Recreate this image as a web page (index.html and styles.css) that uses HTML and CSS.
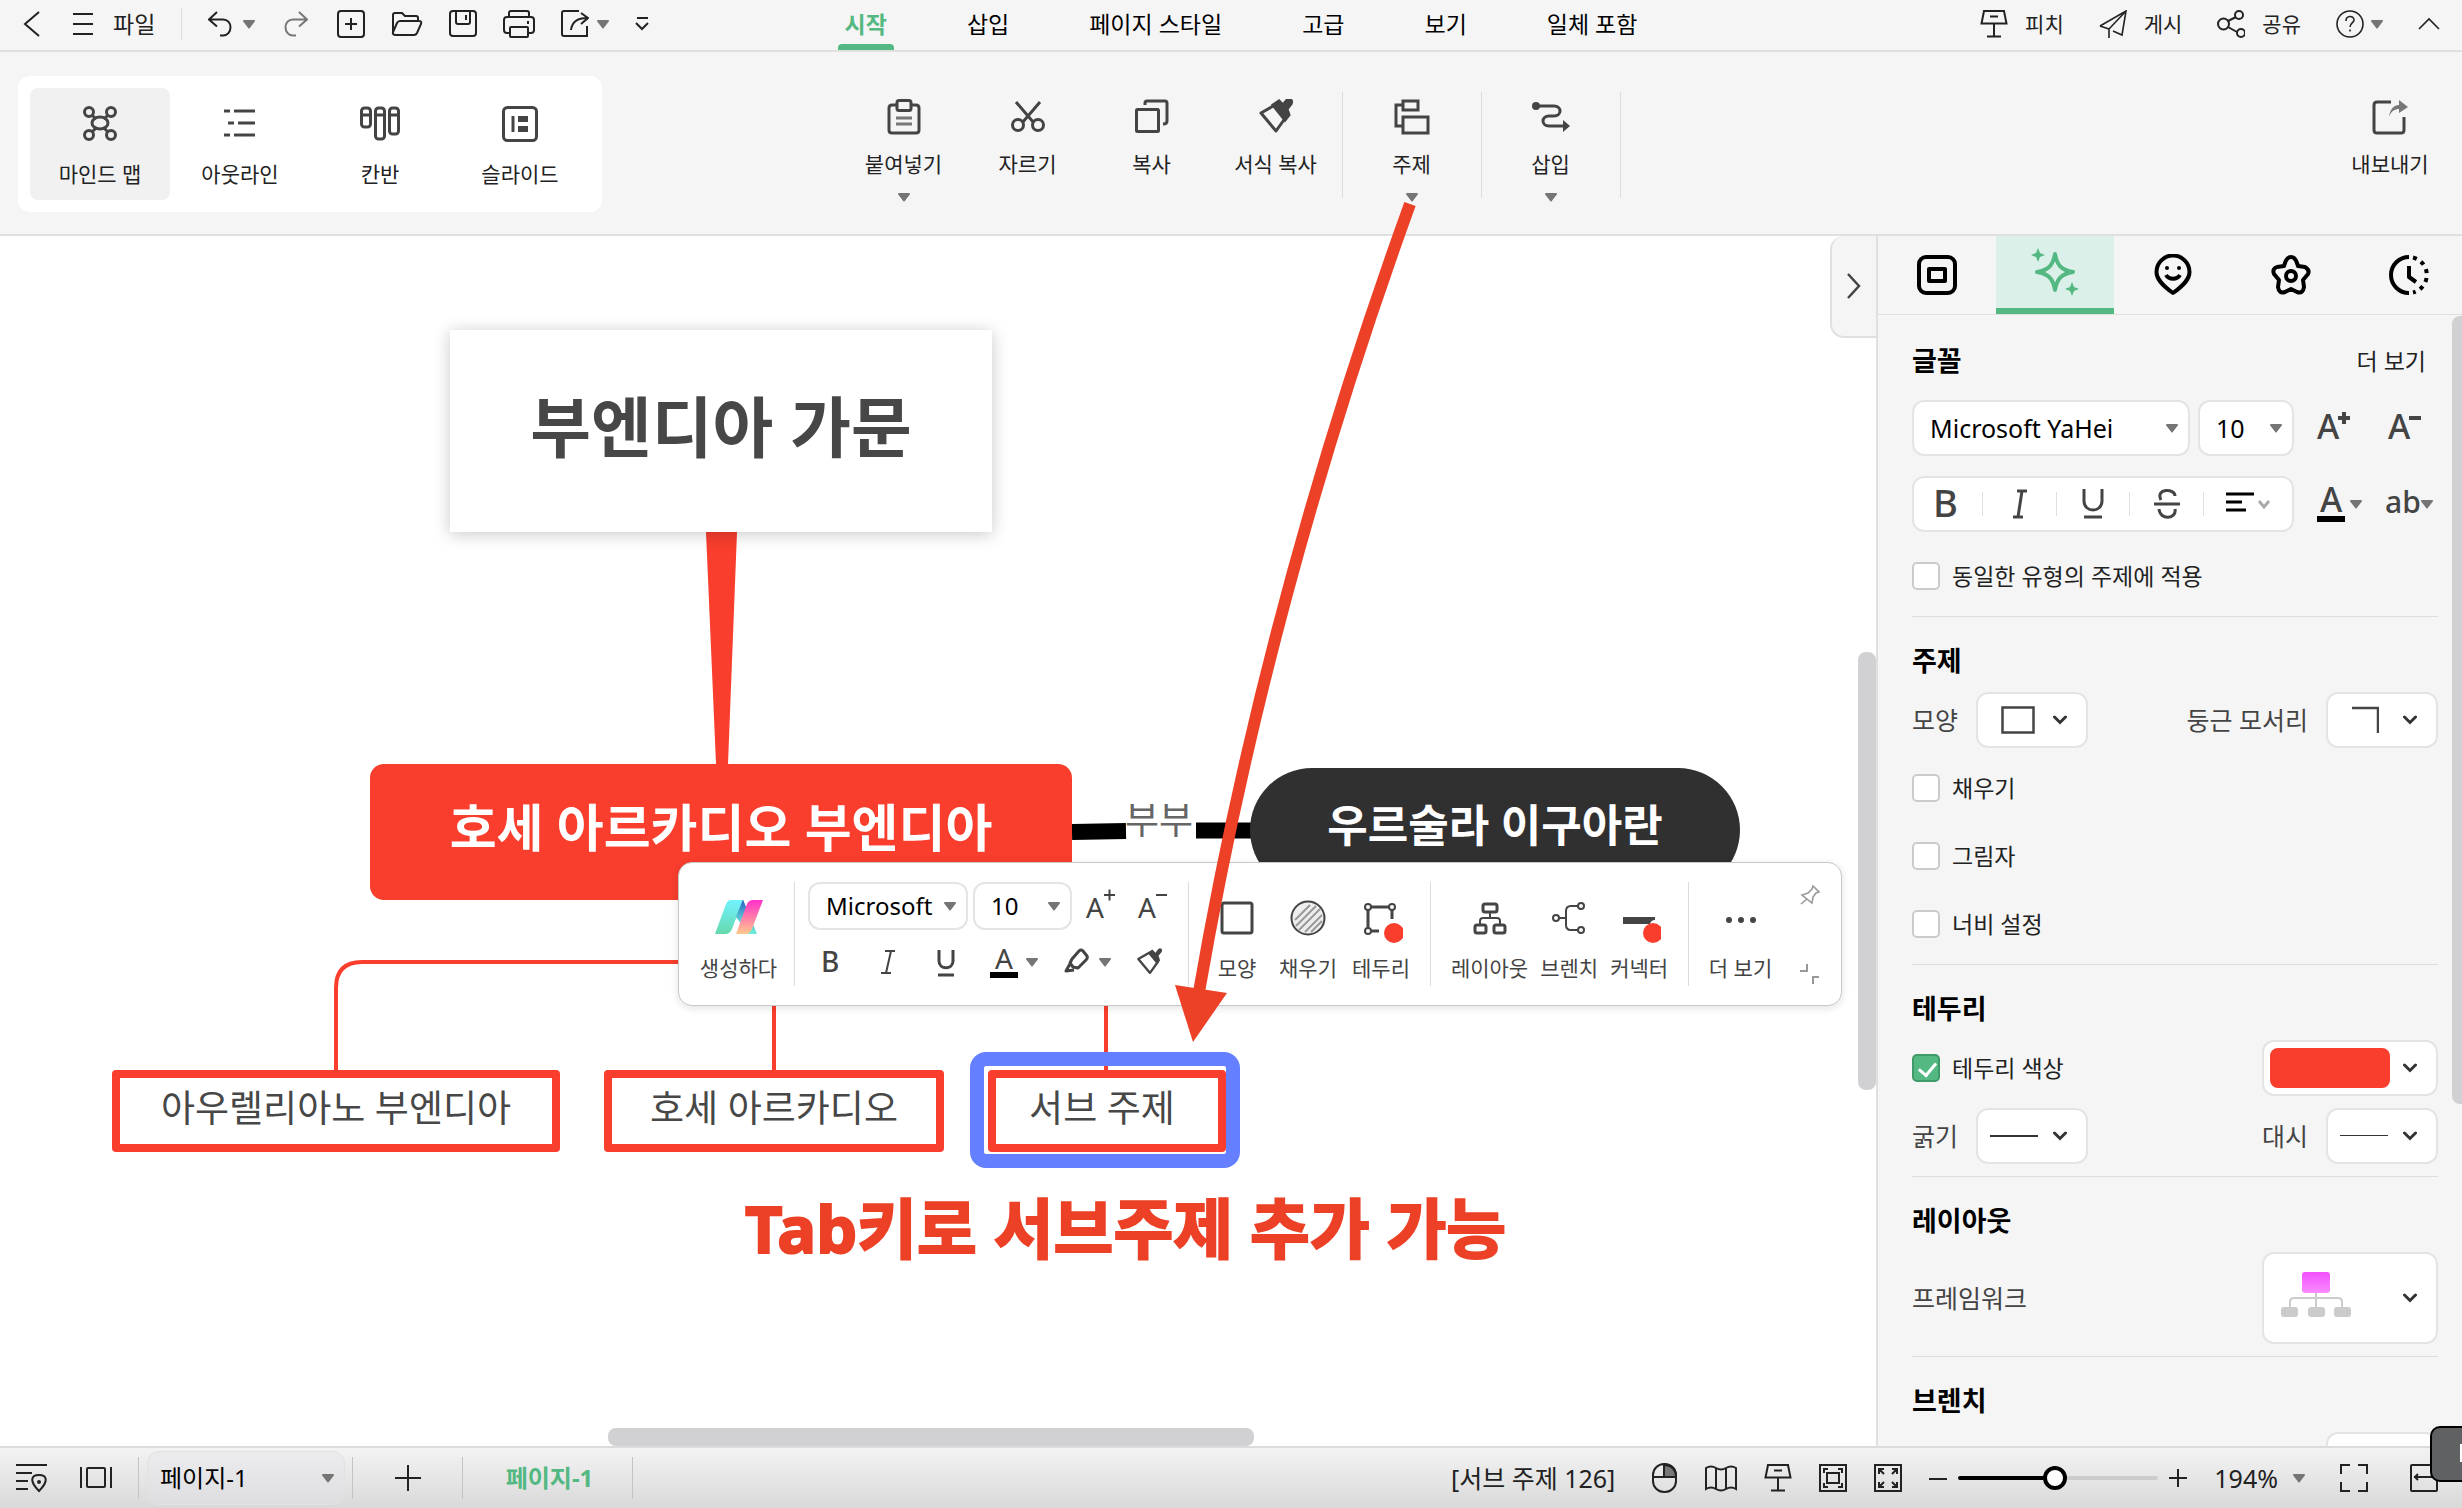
FILE: index.html
```html
<!DOCTYPE html>
<html lang="ko">
<head>
<meta charset="utf-8">
<title>부엔디아 가문</title>
<link rel="stylesheet" href="styles.css">
</head>
<body>
<svg class="defs" aria-hidden="true">
  <symbol id="caret" viewBox="0 0 12 9"><path d="M1 0h10a1 1 0 0 1 .8 1.600L6.800 8a1 1 0 0 1-1.600 0L.2 1.600A1 1 0 0 1 1 0z" fill="#757575"/></symbol>
  <symbol id="chev" viewBox="0 0 14 10"><path d="M1.500 2L7 7.500 12.500 2" fill="none" stroke="#333" stroke-width="3" stroke-linecap="round"/></symbol>
  <symbol id="podium" viewBox="0 0 28 28"><path d="M4 1h20l2.500 12.500h-25zM10 6.500h8M14 14v12.500M7 26.500h14" fill="none" stroke="currentColor" stroke-width="2"/></symbol>
  <symbol id="brush" viewBox="0 0 36 36"><path d="M3 14L17 6l11 12-10 14z" fill="none" stroke="#444" stroke-width="3" stroke-linejoin="round"/><path d="M15 6l6-4 4 4 4-5c2-2 6 0 4 4l-4 5 2 6-4 5z" fill="#444"/></symbol>
</svg>

<header class="titlebar">
  <div class="quick">
    <button class="tool w30" aria-label="뒤로"><svg width="18" height="28" viewBox="0 0 18 28"><path d="M16 2L2 14l14 12"/></svg></button>
    <button class="tool file"><svg width="20" height="24" viewBox="0 0 20 24"><path d="M0 2h20M0 12h20M0 22h20"/></svg>파일</button>
    <i class="vline tall"></i>
    <button class="tool undo" aria-label="실행 취소"><svg width="24" height="26" viewBox="0 0 24 26"><path d="M9 1L1 8.500l8 7M1.500 8.500H15c10 0 10 15.500 0 16h-3"/></svg><svg class="caret"><use href="#caret"/></svg></button>
    <button class="tool w30 dim" aria-label="다시 실행"><svg width="24" height="26" viewBox="0 0 24 26"><path d="M15 1l8 7.500-8 7M22.500 8.500H9c-10 0-10 15.500 0 16h3"/></svg></button>
    <button class="tool" aria-label="새로 만들기"><svg width="28" height="28" viewBox="0 0 28 28"><rect x="1" y="1" width="26" height="26" rx="3"/><path d="M14 8v12M8 14h12"/></svg></button>
    <button class="tool" aria-label="열기"><svg width="32" height="28" viewBox="0 0 32 28"><path d="M2 23V5q0-2 2-2h7l3 3h11q2 0 2 2v3M5 25q-4 0-3-3l4-9q1-2 3-2h19q3 0 2 3l-4 9q-1 2-3 2z"/></svg></button>
    <button class="tool" aria-label="저장"><svg width="28" height="28" viewBox="0 0 28 28"><rect x="1" y="1" width="26" height="25" rx="3"/><path d="M7 1v11q0 2 2 2h10q2 0 2-2V1M17 5v5"/></svg></button>
    <button class="tool" aria-label="인쇄"><svg width="32" height="28" viewBox="0 0 32 28"><path d="M6 7V3q0-2 2-2h16q2 0 2 2v4M6 23H4q-3 0-3-3V10q0-3 3-3h24q3 0 3 3v10q0 3-3 3h-2M25 11v3"/><rect x="7" y="17" width="18" height="10" rx="1"/></svg></button>
    <button class="tool share" aria-label="내보내기"><svg width="28" height="28" viewBox="0 0 28 28"><path d="M18 1H3q-2 0-2 2v21q0 2 2 2h23V16M20 3l7 5-7 6M26 8c-10 0-15 4-16 12"/></svg><svg class="caret"><use href="#caret"/></svg></button>
    <button class="tool" aria-label="도구 모음"><svg width="14" height="16" viewBox="0 0 14 16"><path d="M2 2h11M1 7l6 6 6-6"/></svg></button>
  </div>
  <nav class="menu">
    <a href="#" class="active">시작</a><a href="#">삽입</a><a href="#">페이지 스타일</a><a href="#">고급</a><a href="#">보기</a><a href="#">일체 포함</a>
  </nav>
  <div class="account">
    <button class="tool small"><svg width="28" height="28"><use href="#podium"/></svg>피치</button>
    <button class="tool small"><svg width="28" height="28" viewBox="0 0 28 28"><path d="M1 16L27 1 23 25 14 21M27 1L10 19v9M1 16l9 3" stroke-width="1.600"/></svg>게시</button>
    <button class="tool small"><svg width="28" height="28" viewBox="0 0 28 28"><circle cx="6.500" cy="14" r="5.500"/><circle cx="22" cy="5" r="4"/><circle cx="24" cy="23" r="4"/><path d="M11 11l8-4M11 17l9 5"/></svg>공유</button>
    <button class="tool help" aria-label="도움말"><svg width="28" height="28" viewBox="0 0 28 28"><circle cx="14" cy="14" r="13" stroke-width="1.600"/><path d="M10 11c0-6 8-5.500 8-1 0 3-4 3-4 7M14 19.500v2" stroke-width="1.600"/></svg><svg class="caret"><use href="#caret"/></svg></button>
    <button class="tool up" aria-label="접기"><svg width="22" height="14" viewBox="0 0 22 14"><path d="M1 12L11 2l10 10" stroke-width="1.600"/></svg></button>
  </div>
</header>

<div class="ribbon">
  <div class="ribbon-left">
    <div class="views">
      <button class="view on"><svg width="36" height="36" viewBox="0 0 36 36"><ellipse cx="18" cy="17" rx="8" ry="6"/><circle cx="7" cy="6" r="4.500"/><circle cx="29" cy="6" r="4.500"/><circle cx="7" cy="29" r="4.500"/><circle cx="29" cy="29" r="4.500"/><path d="M10 9l4 4M26 9l-4 4M10 26l4-4M26 26l-4-4"/></svg>마인드 맵</button>
      <button class="view"><svg width="36" height="36" viewBox="0 0 36 36"><path d="M2 5h6M12 5h21M6 17h6M16 17h17M2 29h6M12 29h21"/></svg>아웃라인</button>
      <button class="view"><svg width="40" height="36" viewBox="0 0 40 36"><rect x="1.500" y="2" width="9" height="19" rx="3"/><rect x="15.500" y="2" width="9" height="31" rx="3"/><rect x="29.500" y="2" width="9" height="26" rx="3"/><path d="M2 9h8M16 9h8M30 9h8"/></svg>칸반</button>
      <button class="view"><svg width="36" height="36" viewBox="0 0 36 36"><rect x="1.500" y="1.500" width="33" height="33" rx="4"/><path d="M11 10v16"/><path d="M16 10h10v6H16zM16 20h10v6H16z" fill="#444" stroke="none"/></svg>슬라이드</button>
    </div>
  </div>
  <div class="ribbon-mid">
    <button class="act"><svg width="36" height="36" viewBox="0 0 36 36"><path d="M11 6H6q-3 0-3 3v22q0 3 3 3h24q3 0 3-3V9q0-3-3-3h-5"/><rect x="11" y="1.500" width="14" height="10" rx="2"/><path d="M10 19h16M10 25h16" stroke="#777"/></svg>붙여넣기<svg class="caret"><use href="#caret"/></svg></button>
    <button class="act"><svg width="36" height="36" viewBox="0 0 36 36"><path d="M6 3l18 21M30 3L12 24"/><circle cx="8" cy="26" r="5.500"/><circle cx="28" cy="26" r="5.500"/></svg>자르기</button>
    <button class="act"><svg width="36" height="36" viewBox="0 0 36 36"><rect x="2.500" y="10.500" width="22" height="22" rx="1"/><path d="M11 6V4q0-2 2-2h18q2 0 2 2v18q0 3-4 3"/></svg>복사</button>
    <button class="act"><svg width="36" height="36"><use href="#brush"/></svg>서식 복사</button>
    <i class="vline first"></i>
    <button class="act wide"><svg width="36" height="36" viewBox="0 0 36 36"><rect x="9" y="2" width="15" height="9"/><rect x="9" y="18" width="25" height="16"/><path d="M9 6H2v21h7"/></svg>주제<svg class="caret"><use href="#caret"/></svg></button>
    <i class="vline"></i>
    <button class="act wide"><svg width="38" height="36" viewBox="0 0 38 36"><circle cx="4" cy="7" r="4" fill="#444" stroke="none"/><path d="M4 7h18c8 0 8 10 0 10h-5c-8 0-8 10 0 10h15"/><path d="M31 21l7 6-7 6z" fill="#444" stroke="none"/></svg>삽입<svg class="caret"><use href="#caret"/></svg></button>
    <i class="vline"></i>
  </div>
  <div class="ribbon-right">
    <button class="act"><svg width="36" height="36" viewBox="0 0 36 36"><path d="M19 3H5Q2 3 2 6v25q0 3 3 3h24q3 0 3-3V18"/><path d="M17 18c1-8 5-12 10-12V1l9 7-9 6v-4c-4 0-8 2-10 8z" fill="#777" stroke="none"/></svg>내보내기</button>
  </div>
</div>

<div class="work">
  <main class="canvas">
    <svg class="lines" aria-hidden="true">
      <path d="M706 296h31l-9 232h-12z" fill="#f93e2e"/>
      <path d="M336 836V752q0-26 26-26h744v110M774 726v110" fill="none" stroke="#f93e2e" stroke-width="4"/>
      <path d="M1072 596l54-1M1196 594.500h60" stroke="#000" stroke-width="16"/>
    </svg>
    <div class="node root">부엔디아 가문</div>
    <div class="node jose">호세 아르카디오 부엔디아</div>
    <div class="node ursula">우르술라 이구아란</div>
    <div class="relation">부부</div>
    <div class="node leaf aureliano">아우렐리아노 부엔디아</div>
    <div class="node leaf arcadio">호세 아르카디오</div>
    <div class="node leaf sub">서브 주제</div>
    <div class="selection"></div>
    <p class="note">Tab키로 서브주제 추가 가능</p>
    <button class="collapse" aria-label="패널 접기"><svg width="14" height="26" viewBox="0 0 14 26"><path d="M1 1l11 12L1 25" fill="none" stroke="#444" stroke-width="2.500"/></svg></button>
    <div class="vscroll"></div>
    <div class="hscroll"></div>

    <div class="floatbar">
      <button class="fitem gen"><svg width="48" height="34" viewBox="0 0 48 34">
        <defs><linearGradient id="g1" x2="0" y2="1"><stop stop-color="#72f2ff"/><stop offset="1" stop-color="#64d9ac"/></linearGradient><linearGradient id="g2" x2="0" y2="1"><stop stop-color="#ff2fca"/><stop offset="1" stop-color="#ffc98c"/></linearGradient><linearGradient id="g3" x2="0" y2="1"><stop stop-color="#2a5fc4"/><stop offset="1" stop-color="#6ff0d8"/></linearGradient></defs>
        <path d="M28 0l14 34H32L20 14z" fill="url(#g3)"/><path d="M16 0h12L17 29q-2 5-7 5H0L11 4q2-4 5-4z" fill="url(#g1)"/><path d="M28 0l5 12-5 14-7-9z" fill="url(#g3)"/><path d="M38 0h10L37 29q-2 5-7 5h-9L32 4q2-4 6-4z" fill="url(#g2)"/></svg>생성하다</button>
      <i class="vline"></i>
      <div class="ffont">
        <div class="frow">
          <span class="pick fam"><select aria-label="글꼴"><option>Microsoft</option></select><svg class="caret"><use href="#caret"/></svg></span>
          <span class="pick num"><select aria-label="크기"><option>10</option></select><svg class="caret"><use href="#caret"/></svg></span>
          <button class="glyph" aria-label="크게"><svg width="32" height="36"><text x="2" y="30" class="t28">A</text><path d="M20 7h11M25.500 1.500v11" class="s2"/></svg></button>
          <button class="glyph" aria-label="작게"><svg width="32" height="36"><text x="2" y="30" class="t28">A</text><path d="M20 7h11" class="s2"/></svg></button>
        </div>
        <div class="frow two">
          <button class="glyph" aria-label="굵게"><svg width="28" height="32"><text x="5" y="26" class="t28 med">B</text></svg></button>
          <button class="glyph" aria-label="기울임"><svg width="28" height="32" viewBox="0 0 28 32"><path d="M11 5h10M7 27h10M17 5l-5 22" class="s2"/></svg></button>
          <button class="glyph" aria-label="밑줄"><svg width="28" height="32" viewBox="0 0 28 32"><path d="M7 4v11c0 9 14 9 14 0V4M6 29h16" class="s3"/></svg></button>
          <button class="glyph duo" aria-label="글자 색"><svg width="28" height="32"><text x="5" y="23" class="t28">A</text><path d="M0 26h28v6H0z"/></svg><svg class="caret"><use href="#caret"/></svg></button>
          <button class="glyph duo" aria-label="강조"><svg width="28" height="32" viewBox="0 0 28 32"><path d="M9 13l7-8q2-2 4 0l4 5q1 2-1 4l-8 8-5-1-3-4zM8 16l-5 9 8-1" class="s3"/></svg><svg class="caret"><use href="#caret"/></svg></button>
          <button class="glyph" aria-label="서식 복사"><svg width="28" height="28"><use href="#brush"/></svg></button>
        </div>
      </div>
      <i class="vline"></i>
      <div class="fgroup three">
        <button class="fitem"><svg width="36" height="36" viewBox="0 0 36 36"><rect x="3" y="3" width="30" height="30" rx="2" class="s3"/></svg>모양</button>
        <button class="fitem"><svg width="36" height="36" viewBox="0 0 36 36"><circle cx="18" cy="18" r="16.500" fill="#eee" stroke="#444" stroke-width="2"/><path d="M5 20L20 5M6 26L26 6M9 30L30 9M15 32l17-17M21 32l11-11" stroke="#999" stroke-width="2"/></svg>채우기</button>
        <button class="fitem"><svg width="44" height="44" viewBox="0 0 44 44"><circle cx="9" cy="7" r="3" class="s2"/><circle cx="33" cy="7" r="3" class="s2"/><circle cx="9" cy="31" r="3" class="s2"/><path d="M12 7h18M9 10v18M33 10v9M12 31h8" class="s3"/><circle cx="35" cy="33" r="10" fill="#f93e2e"/></svg>테두리</button>
      </div>
      <i class="vline"></i>
      <div class="fgroup layout">
        <button class="fitem"><svg width="36" height="36" viewBox="0 0 36 36"><rect x="11" y="4" width="14" height="8" rx="2" class="s3"/><rect x="3" y="25" width="11" height="8" rx="2" class="s3"/><rect x="22" y="25" width="11" height="8" rx="2" class="s3"/><path d="M18 12v6M8 25v-4q0-3 3-3h14q3 0 3 3v4" class="s2"/></svg>레이아웃</button>
        <button class="fitem"><svg width="36" height="36" viewBox="0 0 36 36"><circle cx="5" cy="18" r="3" class="s2"/><circle cx="30" cy="6" r="3" class="s2"/><circle cx="30" cy="30" r="3" class="s2"/><path d="M8 18h7M27 6h-7q-5 0-5 5v14q0 5 5 5h7" class="s2"/></svg>브렌치</button>
        <button class="fitem"><svg width="44" height="44" viewBox="0 0 44 44"><path d="M6 17h32v3q-4 0-5 4H6z" fill="#444"/><circle cx="36" cy="33" r="10" fill="#f93e2e"/></svg>커넥터</button>
      </div>
      <i class="vline"></i>
      <button class="fitem more"><svg width="36" height="36" viewBox="0 0 36 36"><circle cx="6" cy="20" r="3"/><circle cx="18" cy="20" r="3"/><circle cx="30" cy="20" r="3"/></svg>더 보기</button>
      <div class="corner">
        <button class="glyph" aria-label="고정"><svg width="20" height="20" viewBox="0 0 20 20"><path d="M13 1l6 6-3 1-3 4-1 6L2 10l6-2 4-4zM7 14l-6 5" fill="none" stroke="#999" stroke-width="1.600"/></svg></button>
        <button class="glyph" aria-label="축소"><svg width="20" height="20" viewBox="0 0 20 20"><path d="M0 7h7V0M19 13h-6v7" fill="none" stroke="#999" stroke-width="2"/></svg></button>
      </div>
    </div>
  </main>

  <aside class="panel">
    <div class="ptabs">
      <button aria-label="스타일"><svg width="40" height="40" viewBox="0 0 40 40"><rect x="2" y="2" width="36" height="36" rx="7" class="k4"/><rect x="12" y="14" width="16" height="12" class="k4"/></svg></button>
      <button class="on" aria-label="효과"><svg width="48" height="48" viewBox="0 0 48 48"><path d="M24 6c2 11 6 16 18 18-12 2-16 7-18 18-2-11-6-16-18-18 12-2 16-7 18-18z" fill="none" stroke="#53b881" stroke-width="4" stroke-linejoin="round"/><path d="M7 0l2 5 5 2-5 2-2 5-2-5-5-2 5-2zM41 34l2 5 5 2-5 2-2 5-2-5-5-2 5-2z" fill="#53b881"/></svg></button>
      <button aria-label="아이콘"><svg width="40" height="42" viewBox="0 0 40 42"><path d="M20 39C9 31 3.500 25 3.500 18a16.500 16.500 0 0 1 33 0c0 7-5.500 13-16.500 21zM13 21c3 5 11 5 14 0" class="k4"/><circle cx="14" cy="14" r="2"/><circle cx="26" cy="14" r="2"/></svg></button>
      <button aria-label="클립아트"><svg width="40" height="40" viewBox="0 0 40 40"><path d="M20 2q4 0 6 6l1 3 7 1q5 3 3 7l-5 6 1 7q-1 7-7 5l-6-3-6 3q-6 2-7-5l1-7-5-6q-2-5 3-7l7-1 1-3q2-6 6-6z" class="k4"/><circle cx="20" cy="21" r="5" class="k4"/></svg></button>
      <button aria-label="기록"><svg width="40" height="40" viewBox="0 0 40 40"><path d="M20 2a18 18 0 0 0 0 36M20 11v11l7 5" class="k4"/><path d="M24 2.500A18 18 0 0 1 24 37.500" class="k4" stroke-dasharray="4 5"/></svg></button>
    </div>
    <div class="pbody">
      <section class="first">
        <div class="phead"><h2>글꼴</h2><a href="#">더 보기</a></div>
        <div class="prow fonts">
          <span class="pick box family"><select aria-label="글꼴 이름"><option>Microsoft YaHei</option></select><svg class="caret"><use href="#caret"/></svg></span>
          <span class="pick box size"><select aria-label="글꼴 크기"><option>10</option></select><svg class="caret"><use href="#caret"/></svg></span>
          <button class="glyph pair" aria-label="크게"><svg width="36" height="36"><text x="0" y="29" class="t34 med">A</text><path d="M21 8h12M27 2v12" class="s4"/></svg></button>
          <button class="glyph pair" aria-label="작게"><svg width="36" height="36"><text x="0" y="29" class="t34 med">A</text><path d="M21 8h12" class="s4"/></svg></button>
        </div>
        <div class="prow fonts">
          <div class="box strip">
            <button class="glyph" aria-label="굵게"><svg width="32" height="36"><text x="3" y="31" class="t38 med">B</text></svg></button><i></i>
            <button class="glyph" aria-label="기울임"><svg width="32" height="36" viewBox="0 0 32 36"><path d="M13 5h10M9 31h10M18 5l-4 26" class="s3"/></svg></button><i></i>
            <button class="glyph" aria-label="밑줄"><svg width="32" height="36" viewBox="0 0 32 36"><path d="M7 3v12c0 12 18 12 18 0V3M7 31h18" class="s3"/></svg></button><i></i>
            <button class="glyph" aria-label="취소선"><svg width="32" height="36" viewBox="0 0 32 36"><path d="M10 14C4 2 24 2 24 10M3 18h26M8 23c1 12 18 10 16 0" class="s3"/></svg></button><i></i>
            <button class="glyph" aria-label="정렬"><svg width="48" height="36" viewBox="0 0 48 36"><path d="M2 8h28M2 16h16M2 24h20" stroke="#000" stroke-width="3"/><path d="M35 15l5 6 5-6" fill="none" stroke="#aaa" stroke-width="3"/></svg></button>
          </div>
          <button class="glyph pair" aria-label="글자 색"><svg width="28" height="36"><text x="3" y="26" class="t34 med">A</text><path d="M0 30h28v6H0z"/></svg><svg class="caret"><use href="#caret"/></svg></button>
          <button class="glyph pair ab" aria-label="대소문자"><svg width="34" height="36"><text x="0" y="27" class="t30 med">ab</text></svg><svg class="caret"><use href="#caret"/></svg></button>
        </div>
        <label class="check same"><input type="checkbox">동일한 유형의 주제에 적용</label>
      </section>
      <section>
        <h2>주제</h2>
        <div class="prow"><span>모양</span><button class="box drop" aria-label="모양"><svg width="34" height="28" viewBox="0 0 34 28"><rect x="1.500" y="1.500" width="31" height="25" fill="none" stroke="#444" stroke-width="2.500"/></svg><svg class="chev"><use href="#chev"/></svg></button>
          <span class="end">둥근 모서리</span><button class="box drop" aria-label="둥근 모서리"><svg width="28" height="28" viewBox="0 0 28 28"><path d="M1 2h26v25" fill="none" stroke="#444" stroke-width="2.500"/></svg><svg class="chev"><use href="#chev"/></svg></button></div>
        <div class="checks">
          <label class="check"><input type="checkbox">채우기</label>
          <label class="check"><input type="checkbox">그림자</label>
          <label class="check"><input type="checkbox">너비 설정</label>
        </div>
      </section>
      <section class="tight">
        <h2>테두리</h2>
        <div class="prow"><label class="check"><input type="checkbox" checked>테두리 색상</label><button class="box drop large end" aria-label="테두리 색상"><b class="swatch"></b><svg class="chev"><use href="#chev"/></svg></button></div>
        <div class="prow"><span>굵기</span><button class="box drop line" aria-label="굵기"><svg width="48" height="4"><path d="M0 2h48" stroke="#333" stroke-width="2"/></svg><svg class="chev"><use href="#chev"/></svg></button>
          <span class="end">대시</span><button class="box drop line" aria-label="대시"><svg width="48" height="4"><path d="M0 1.500h48" stroke="#333"/></svg><svg class="chev"><use href="#chev"/></svg></button></div>
      </section>
      <section class="tight">
        <h2>레이아웃</h2>
        <div class="prow"><span>프레임워크</span><button class="box drop large tallbox end" aria-label="프레임워크"><svg width="70" height="52" viewBox="0 0 70 52"><defs><linearGradient id="pk" x2="0" y2="1"><stop stop-color="#f250fc"/><stop offset="1" stop-color="#f88cff"/></linearGradient></defs><path d="M35 20v16M9 36v-6q0-4 4-4h44q4 0 4 4v6" fill="none" stroke="#ccc" stroke-width="2"/><rect x="21" y="0" width="28" height="21" rx="3" fill="url(#pk)"/><g fill="#cbcbcb"><rect x="0" y="35" width="17" height="10" rx="3"/><rect x="27" y="35" width="17" height="10" rx="3"/><rect x="53" y="35" width="17" height="10" rx="3"/></g></svg><svg class="chev"><use href="#chev"/></svg></button></div>
      </section>
      <section class="tight">
        <h2>브렌치</h2>
        <div class="prow"><button class="box drop end" aria-label="브렌치"></button></div>
      </section>
      <div class="pscroll"></div>
    </div>
  </aside>
</div>

<footer class="status">
  <button class="tool" aria-label="개요"><svg width="32" height="30" viewBox="0 0 32 30"><path d="M0 2h31M0 10h16M0 18h12M0 26h12M23 28c-10-10-8-16 0-16s10 6 0 16z"/><circle cx="23" cy="19" r="1"/></svg></button>
  <button class="tool frame" aria-label="페이지 보기"><svg width="32" height="24" viewBox="0 0 32 24"><rect x="7" y="2" width="18" height="19" rx="1"/><path d="M1 1v21M31 1v21"/></svg></button>
  <i class="vline"></i>
  <span class="pick page"><select aria-label="페이지"><option>페이지-1</option></select><svg class="caret"><use href="#caret"/></svg></span>
  <i class="vline"></i>
  <button class="tool add" aria-label="페이지 추가"><svg width="28" height="28" viewBox="0 0 28 28"><path d="M14 1v26M1 14h26"/></svg></button>
  <i class="vline"></i>
  <a href="#" class="ptab">페이지-1</a>
  <i class="vline"></i>
  <div class="sright">
    <span class="sel">[서브 주제 126]</span>
    <button class="tool" aria-label="마우스"><svg width="28" height="30" viewBox="0 0 28 30"><path d="M14 2h1q11 1 11 12H14z" fill="#777"/><rect x="3" y="1" width="23" height="28" rx="11"/><path d="M3 14h23M14 1v13"/></svg></button>
    <button class="tool" aria-label="지도"><svg width="32" height="28" viewBox="0 0 32 28"><path d="M1 4q5-3 10 0 5 3 10 0 5-3 10 0v21q-5-3-10 0-5 3-10 0-5-3-10 0zM11 4v21M21 4v21"/></svg></button>
    <button class="tool" aria-label="발표"><svg width="28" height="28"><use href="#podium"/></svg></button>
    <button class="tool" aria-label="맞춤"><svg width="28" height="28" viewBox="0 0 28 28"><rect x="1" y="1" width="26" height="26"/><rect x="8" y="9" width="12" height="10"/><path d="M5 9V5h4M19 5h4v4M5 19v4h4M19 23h4v-4"/></svg></button>
    <button class="tool" aria-label="채움"><svg width="28" height="28" viewBox="0 0 28 28"><rect x="1" y="1" width="26" height="26"/><path d="M5 10V5h5M18 5h5v5M5 18v5h5M18 23h5v-5M5 5l5 5M23 5l-5 5M5 23l5-5M23 23l-5-5"/></svg></button>
    <div class="zoom">
      <button class="tool" aria-label="축소"><svg width="18" height="18" viewBox="0 0 18 18"><path d="M0 10h18"/></svg></button>
      <input type="range" min="0" max="100" value="48" aria-label="확대 비율">
      <button class="tool" aria-label="확대"><svg width="18" height="18" viewBox="0 0 18 18"><path d="M0 9h18M9 0v18"/></svg></button>
    </div>
    <button class="tool pct">194%<svg class="caret"><use href="#caret"/></svg></button>
    <button class="tool" aria-label="전체 화면"><svg width="28" height="28" viewBox="0 0 28 28"><path d="M1 10V1h9M18 1h9v9M1 18v9h9M18 27h9v-9"/></svg></button>
    <button class="tool last" aria-label="너비 맞춤"><svg width="28" height="28" viewBox="0 0 28 28"><rect x="1" y="1" width="26" height="26" rx="1"/><path d="M4 13h20M8 10l-3 3 3 3"/></svg></button>
  </div>
</footer>

<svg class="arrow" aria-hidden="true"><path d="M1410 204Q1267 599 1199 992" fill="none" stroke="#ec4126" stroke-width="12"/><path d="M1175 985l52 8-34 49z" fill="#ec4126"/></svg>
<div class="dock"></div>
</body>
</html>
```
FILE: styles.css
```css
* { box-sizing: border-box; margin: 0; }
body {
  height: 100vh;
  display: flex;
  flex-direction: column;
  overflow: hidden;
  position: relative;
  background: #f5f5f5;
  color: #222;
  font: 23px/32px "Noto Sans", "Noto Sans CJK KR", sans-serif;
}
button, select, input { font: inherit; color: inherit; border: 0; padding: 0; background: none; }
button { display: flex; align-items: center; justify-content: center; white-space: nowrap; }
a { color: inherit; text-decoration: none; }
svg { display: block; flex: none; }
.glyph svg { overflow: visible; }
.defs { position: absolute; width: 0; height: 0; }
.caret { width: 12px; height: 9px; }
.chev { width: 14px; height: 10px; }
.vline { width: 1px; background: #dcdcdc; flex: none; }

.tool { color: #222; }
.tool > svg:not(.caret) { fill: none; stroke: currentColor; stroke-width: 2; }

/* title bar */
.titlebar {
  display: grid;
  grid-template-columns: 1fr auto 1fr;
  height: 52px;
  border-bottom: 2px solid #e0e0e0;
  flex: none;
}
.quick { display: flex; align-items: center; gap: 26px; padding-left: 17px; padding-bottom: 2px; }
.w30 { width: 30px; }
.file { gap: 20px; }
.tall { height: 32px; }
.undo { gap: 11px; }
.share { gap: 8px; }
.dim { color: #777; }
.menu { display: flex; gap: 80px; padding-left: 20px; color: #000; }
.menu a { position: relative; line-height: 48px; }
.menu .active { color: #53b881; font-weight: 700; }
.menu .active::after {
  content: "";
  position: absolute;
  left: -7px;
  right: -7px;
  bottom: 0;
  height: 6px;
  border-radius: 4px 4px 0 0;
  background: #53b881;
}
.account { display: flex; align-items: center; justify-content: flex-end; gap: 35px; padding-right: 22px; padding-bottom: 2px; }
.small { font-size: 21px; gap: 17px; }
.help { gap: 7px; }

/* ribbon */
.ribbon {
  display: grid;
  grid-template-columns: 1fr auto 1fr;
  align-items: start;
  height: 184px;
  border-bottom: 2px solid #e0e0e0;
  flex: none;
  font-size: 21px;
  padding: 24px 18px;
}
.ribbon svg:not(.caret) { fill: none; stroke: #444; stroke-width: 3; }
.views { display: inline-flex; background: #fff; border-radius: 12px; padding: 12px; }
.view { flex-direction: column; width: 140px; height: 112px; border-radius: 8px; gap: 16px; padding-top: 8px; }
.view.on { background: #f1f1f1; }
.ribbon-mid { display: flex; padding-top: 16px; }
.ribbon-mid .vline { height: 106px; }
.ribbon-mid .first { margin-left: 4px; }
.act { flex-direction: column; justify-content: flex-start; width: 124px; gap: 13px; padding-top: 7px; }
.act.wide { width: 138px; }
.ribbon-right { display: flex; justify-content: flex-end; padding-top: 16px; }
.ribbon-right .act { width: 108px; }

/* work area */
.work { display: flex; flex: 1; min-height: 0; }
.canvas { flex: 1; position: relative; background: #fff; overflow: hidden; color: #474747; }
.lines { position: absolute; inset: 0; width: 100%; height: 100%; }
.node { position: absolute; display: flex; align-items: center; justify-content: center; white-space: nowrap; padding-bottom: 10px; }
.root { left: 450px; top: 94px; width: 542px; height: 202px; background: #fff; box-shadow: 0 2px 16px rgba(0,0,0,.22); font-size: 66px; font-weight: 700; }
.jose { left: 370px; top: 528px; width: 702px; height: 136px; border-radius: 14px; background: #f93e2e; color: #fff; font-size: 51px; font-weight: 700; }
.ursula { left: 1250px; top: 532px; width: 490px; height: 124px; border-radius: 62px; background: #303030; color: #fff; font-size: 44px; font-weight: 700; }
.relation { position: absolute; left: 1125px; top: 568px; font-size: 37px; color: #666; }
.leaf { top: 834px; height: 82px; border: 8px solid #f93e2e; border-radius: 4px; background: #fff; font-size: 37px; padding-bottom: 6px; }
.aureliano { left: 112px; width: 448px; }
.arcadio { left: 604px; width: 340px; }
.sub { left: 988px; width: 238px; padding-right: 10px; }
.selection { position: absolute; left: 970px; top: 816px; width: 270px; height: 116px; border: 14px solid #647fff; border-radius: 16px; }
.note { position: absolute; left: 745px; top: 952px; line-height: 80px; font-size: 65px; font-weight: 700; color: #ec4126; white-space: nowrap; -webkit-text-stroke: 2px #ec4126; }
.collapse { position: absolute; right: 0; top: 0; width: 46px; height: 102px; border: 2px solid #e0e0e0; border-top: 0; border-right: 0; border-radius: 14px 0 0 14px; background: #f5f5f5; }
.vscroll { position: absolute; right: 0; top: 416px; width: 18px; height: 438px; border-radius: 8px; background: #d1d1d3; }
.hscroll { position: absolute; left: 608px; bottom: 0; width: 646px; height: 18px; border-radius: 8px; background: #d1d1d3; }

/* floating toolbar */
.floatbar {
  position: absolute;
  left: 678px;
  top: 626px;
  width: 1164px;
  height: 144px;
  display: flex;
  padding: 19px 0;
  border: 1px solid #c8c8c8;
  border-radius: 14px;
  background: #fff;
  box-shadow: 0 2px 8px rgba(0,0,0,.12);
  font-size: 21px;
}
.floatbar .vline { height: 104px; }
.fitem { flex-direction: column; justify-content: flex-end; gap: 16px; height: 104px; color: #444; padding-bottom: 2px; }
.fitem svg[height="44"] { margin: 0 -4px -8px; }
.gen { width: 115px; gap: 18px; padding-left: 4px; }
.ffont { width: 393px; padding-left: 13px; display: flex; flex-direction: column; gap: 16px; }
.frow { display: flex; align-items: center; gap: 5px; }
.frow.two { gap: 30px; padding-left: 8px; }
.pick { position: relative; display: block; color: #000; }
.pick select { appearance: none; width: 100%; height: 100%; }
.pick .caret { position: absolute; right: 10px; top: 50%; margin-top: -4px; pointer-events: none; }
.fam, .num { height: 48px; border: 2px solid #e4e4e4; border-radius: 12px; padding-left: 16px; font-size: 24px; }
.fam { width: 160px; }
.num { width: 99px; }
.frow .glyph + .glyph { margin-left: 15px; }
.frow .num + .glyph { margin-left: 7px; }
.frow.two .glyph + .glyph { margin-left: 0; }
.duo { gap: 8px; margin-right: -5px; }
text { fill: #444; font-family: "Noto Sans", sans-serif; }
.med { font-weight: 500; }
.t28 { font-size: 28px; }
.t30 { font-size: 30px; }
.t34 { font-size: 34px; }
.t38 { font-size: 38px; }
.s2 { fill: none; stroke: #444; stroke-width: 2; }
.s3 { fill: none; stroke: #444; stroke-width: 3; stroke-linejoin: round; }
.s4 { fill: none; stroke: #444; stroke-width: 4; }
.k4 { fill: none; stroke: #000; stroke-width: 4; stroke-linejoin: round; }
.fgroup { display: flex; justify-content: center; gap: 12px; width: 241px; }
.fgroup.layout { width: 257px; }
.fgroup.three { gap: 15px; padding-left: 8px; }
.three .fitem:first-child { width: 40px; margin-right: 7px; }
.more { width: 103px; }
.more svg { fill: #444; }
.corner { display: flex; flex-direction: column; justify-content: space-between; padding: 3px 0 2px 8px; }

/* side panel */
.panel { width: 586px; flex: none; border-left: 2px solid #e0e0e0; display: flex; flex-direction: column; min-height: 0; }
.ptabs { display: flex; height: 79px; border-bottom: 1px solid #e0e0e0; flex: none; overflow: hidden; }
.ptabs button { width: 118px; flex: none; height: 78px; }
.ptabs .on { background: #dcf0ea; border-bottom: 6px solid #53b881; }
.pbody { position: relative; flex: 1; min-height: 0; overflow: hidden; padding: 0 24px 0 34px; }
.pscroll { position: absolute; right: 0; top: 1px; width: 10px; height: 788px; background: #d1d1d3; border-radius: 8px 0 0 8px; }
section { padding: 28px 0 26px; border-bottom: 1px solid #dedede; display: flex; flex-direction: column; }
section.first { padding-top: 30px; gap: 20px; }
section.tight { padding-bottom: 12px; }
section:last-of-type { border: 0; }
h2 { font-size: 27px; line-height: 32px; font-weight: 700; color: #000; margin-bottom: 15px; }
.phead { display: flex; justify-content: space-between; padding-right: 12px; margin-bottom: 3px; }
.phead h2 { margin: 0; }
.prow { display: flex; align-items: center; color: #444; font-size: 25px; }
.prow + .prow { margin-top: 12px; }
.fonts { gap: 8px; }
.fonts + .fonts { margin-top: 0; }
.box { border: 2px solid #e4e4e4; border-radius: 12px; background: #fff; height: 56px; flex: none; }
.family { width: 278px; padding-left: 16px; color: #000; }
.size { width: 96px; padding-left: 16px; color: #000; }
.strip { width: 382px; display: flex; align-items: center; justify-content: space-between; padding: 0 20px 0 16px; }
.strip i { width: 1px; height: 24px; background: #e0e0e0; }
.pair { width: 48px; justify-content: flex-start; gap: 5px; margin-left: 15px; }
.pair.ab { gap: 2px; margin-left: 12px; }
.check { display: flex; align-items: center; gap: 12px; color: #222; font-size: 23px; line-height: 28px; }
.check.same { margin-top: 10px; }
.check input { appearance: none; width: 28px; height: 28px; border: 2px solid #cbcbcb; border-radius: 5px; background: #fff; flex: none; }
.check input:checked { background: #53b881; border-color: #3f9a69; position: relative; }
.check input:checked::after { content: ""; position: absolute; left: 8px; top: 3px; width: 8px; height: 14px; border: solid #fff; border-width: 0 3px 3px 0; rotate: 40deg; }
.checks { display: flex; flex-direction: column; gap: 40px; padding-top: 26px; }
.end { margin-left: auto; }
.drop { width: 112px; margin-left: 18px; justify-content: space-between; padding: 0 19px 0 23px; }
.drop.line { padding-left: 12px; }
.drop.large { width: 176px; padding-left: 6px; }
.drop.end { margin-left: auto; }
.tallbox { height: 92px; }
.drop.tallbox { padding-left: 17px; }
.swatch { width: 120px; height: 40px; border-radius: 8px; background: #f93e2e; }

/* status bar */
.status {
  display: flex;
  align-items: center;
  height: 62px;
  flex: none;
  border-top: 2px solid #dcdcdc;
  background: linear-gradient(#f3f3f3, #d9d9d9);
  padding: 0 24px 0 16px;
}
.status .vline { height: 42px; background: #c4c4c4; }
.frame { margin: 0 26px 0 32px; }
.page { width: 198px; height: 54px; margin: 0 7px 0 8px; padding-left: 12px; border: 1px solid #e2e2e2; border-radius: 12px; background: linear-gradient(#ececee, #dedee0); font-size: 24px; }
.add { width: 109px; }
.ptab { width: 169px; padding-left: 4px; text-align: center; color: #53b881; font-size: 24px; font-weight: 700; }
.sright { display: flex; align-items: center; gap: 27px; margin-left: auto; }
.sel { font-size: 25px; margin-right: 8px; }
.zoom { display: flex; align-items: center; gap: 11px; }
.zoom input { appearance: none; width: 200px; height: 24px; margin: 0; }
.zoom input::-webkit-slider-runnable-track { height: 4px; border-radius: 2px; background: linear-gradient(90deg, #000 48%, #ccc 48%); }
.zoom input::-webkit-slider-thumb { appearance: none; width: 24px; height: 24px; margin-top: -10px; border: 4px solid #000; border-radius: 50%; background: #fff; }
.pct { font-size: 25px; gap: 15px; margin-right: 8px; }
.last { margin-left: 15px; }

.arrow { position: absolute; left: 0; top: 0; width: 100%; height: 100%; pointer-events: none; }
.dock { position: absolute; right: -40px; bottom: 26px; width: 72px; height: 56px; border: 2px solid #000; border-radius: 10px; background: #606163; }
.dock::before { content: ""; position: absolute; left: 28px; top: 16px; width: 4px; height: 18px; background: #fff; }
```
